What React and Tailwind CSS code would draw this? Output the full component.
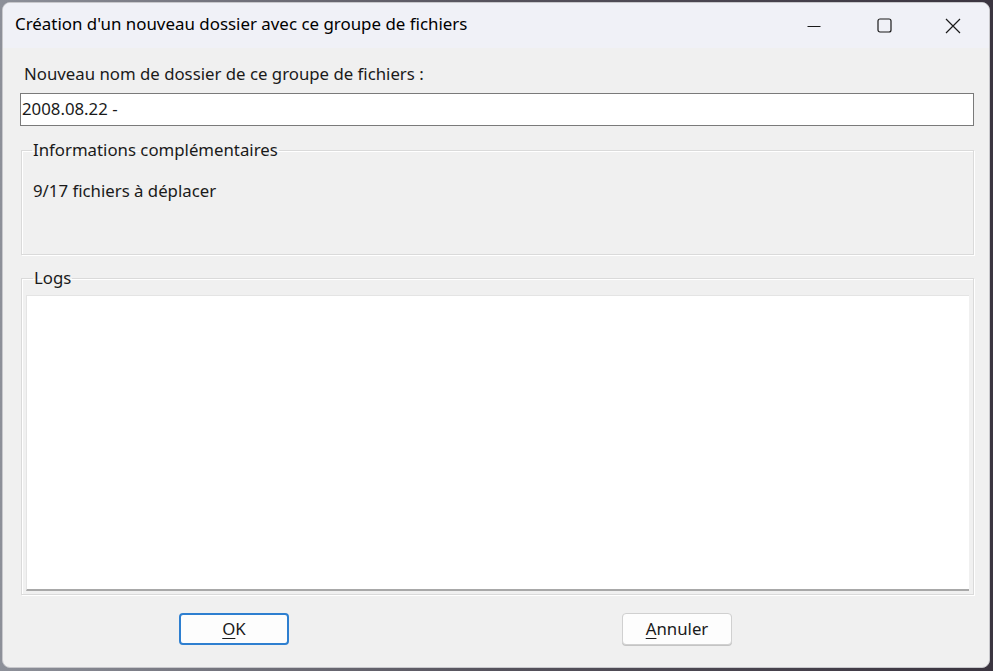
import React from "react";

export default function App() {
  return (
    <div
      className="w-[993px] h-[671px] bg-gradient-to-r from-[#8d9099] via-[#55525c] to-[#3b3540] pt-[2px] pl-[2px]"
      style={{ fontFamily: '"Noto Sans", "Open Sans", sans-serif' }}
    >
      <div className="w-[988px] h-[666px] rounded-[8px] overflow-hidden bg-[#f0f0f0] flex flex-col border border-[#c8c8cc]">
        {/* Title bar */}
        <div className="h-[45px] shrink-0 bg-[#f0f1f7] flex items-center">
          <div className="pl-[12px] text-[16.9px] text-black flex-1 leading-none pb-[2px]">
            Création d'un nouveau dossier avec ce groupe de fichiers
          </div>
          <div className="flex items-center h-full">
            <div className="w-[70px] h-full flex items-center justify-center">
              <svg width="14" height="14" viewBox="0 0 14 14">
                <line x1="0.5" y1="7.5" x2="13.5" y2="7.5" stroke="#1a1a1a" strokeWidth="1" />
              </svg>
            </div>
            <div className="w-[70px] h-full flex items-center justify-center">
              <svg width="15" height="15" viewBox="0 0 15 15">
                <rect x="1" y="1" width="13" height="13" rx="2" fill="none" stroke="#1a1a1a" strokeWidth="1.2" />
              </svg>
            </div>
            <div className="w-[70px] h-full flex items-center justify-center pr-[2px]">
              <svg width="16" height="16" viewBox="0 0 16 16">
                <path d="M1 1 L15 15 M15 1 L1 15" stroke="#1a1a1a" strokeWidth="1.2" />
              </svg>
            </div>
          </div>
        </div>

        {/* Body */}
        <div className="flex-1 flex flex-col pl-[17px] pr-[15px] text-[16.8px] text-[#1a1a1a]">
          <div className="pt-[16px] pl-[4px] leading-[20px]">
            Nouveau nom de dossier de ce groupe de fichiers :
          </div>
          <div className="mt-[9px] h-[33px] bg-white border border-[#7a7a7a] flex items-center pl-[1px] leading-none">
            <span>2008.08.22 -</span>
          </div>

          <fieldset className="mt-[14px] ml-px h-[115px] border border-[#dadada] shadow-[inset_1px_1px_0_#ffffff,1px_1px_0_#ffffff] px-[11px]">
            <legend className="px-[1px] leading-[20px] -ml-[1px]">Informations complémentaires</legend>
            <div className="pt-[21px] leading-[20px]">9/17 fichiers à déplacer</div>
          </fieldset>

          <fieldset className="mt-[13px] ml-px h-[327px] border border-[#dadada] shadow-[inset_1px_1px_0_#ffffff,1px_1px_0_#ffffff] px-[4px]">
            <legend className="ml-[7px] px-[1px] leading-[20px]">Logs</legend>
            <div className="mt-[7px] h-[296px] bg-white border-l border-t border-[#e4e4e4] border-b-2 border-b-[#a8a8a8]" />
          </fieldset>

          <div className="flex mt-[18px]">
            <button className="ml-[159px] w-[110px] h-[32px] rounded-[4px] border-2 border-[#2e7fd0] bg-[#fdfdfd] text-[16.8px] text-[#1a1a1a] flex items-center justify-center">
              <span><span className="underline underline-offset-[3px]">O</span>K</span>
            </button>
            <button className="ml-[333px] w-[110px] h-[32px] rounded-[4px] border border-[#d0d0d0] bg-[#fdfdfd] text-[16.8px] text-[#1a1a1a] flex items-center justify-center shadow-[0_1px_0_#c4c4c4]">
              <span><span className="underline underline-offset-[3px]">A</span>nnuler</span>
            </button>
          </div>
        </div>
      </div>
    </div>
  );
}
